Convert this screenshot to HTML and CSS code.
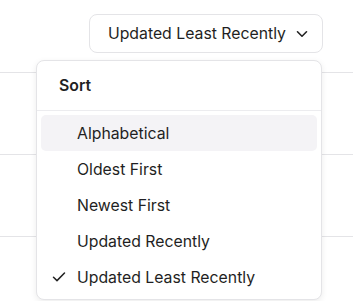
FILE: index.html
```html
<!DOCTYPE html>
<html>
<head>
<meta charset="utf-8">
<link rel="stylesheet" href="styles.css">
</head>
<body>
<div class="page">
  <div class="toolbar">
    <button class="sort-btn">
      <span>Updated Least Recently</span>
      <svg class="chev" width="12" height="8" viewBox="0 0 12 8"><path d="M1.5 1.8 L6 6.2 L10.5 1.8" fill="none" stroke="#222" stroke-width="1.6" stroke-linecap="round" stroke-linejoin="round"/></svg>
    </button>
  </div>
  <div class="list">
    <div class="row"></div>
    <div class="row"></div>
    <div class="row"></div>
  </div>
  <div class="menu">
    <div class="menu-title">Sort</div>
    <ul class="menu-items">
      <li class="item active">Alphabetical</li>
      <li class="item">Oldest First</li>
      <li class="item">Newest First</li>
      <li class="item">Updated Recently</li>
      <li class="item checked">
        <svg class="check" width="14" height="12" viewBox="0 0 14 12"><path d="M1.5 6.2 L5 9.6 L12.5 2" fill="none" stroke="#222" stroke-width="1.5" stroke-linecap="round" stroke-linejoin="round"/></svg>
        Updated Least Recently
      </li>
    </ul>
  </div>
</div>
</body>
</html>
```

FILE: styles.css
```css
* { box-sizing: border-box; }
html, body { margin: 0; padding: 0; background: #fff; }
body { font-family: Inter, "Noto Sans", sans-serif; color: #1f1f23; }
.page { position: relative; width: 353px; height: 301px; overflow: hidden; }
.toolbar { display: flex; justify-content: flex-end; padding: 14px 30px 0 0; }
.sort-btn {
  display: flex; align-items: center; gap: 10px;
  height: 39px; padding: 0 14px 0 18px;
  border: 1px solid #e4e4e7; border-radius: 8px; background: #fff;
  font-family: inherit; font-size: 15.8px; color: #1f1f23;
}
.chev { margin-top: 1px; }
.list { margin-top: 19px; }
.row { height: 82px; border-top: 1px solid #e4e4e7; }
.menu {
  position: absolute; left: 36px; top: 60px; width: 286px; height: 240px;
  border: 1px solid #e4e4e7; border-radius: 8px; background: #fff;
  box-shadow: 0 2px 6px rgba(0,0,0,0.08);
}
.menu-title {
  height: 50px; display: flex; align-items: center; padding-left: 22px;
  font-size: 15.8px; font-weight: 600; border-bottom: 1px solid #ececef;
}
.menu-items { list-style: none; margin: 0; padding: 4px; }
.item {
  position: relative; height: 36px; display: flex; align-items: center;
  padding-left: 36px; font-size: 15.8px; border-radius: 5px;
}
.item.active { background: #f4f3f6; }
.check { position: absolute; left: 11px; top: 12px; }
```
